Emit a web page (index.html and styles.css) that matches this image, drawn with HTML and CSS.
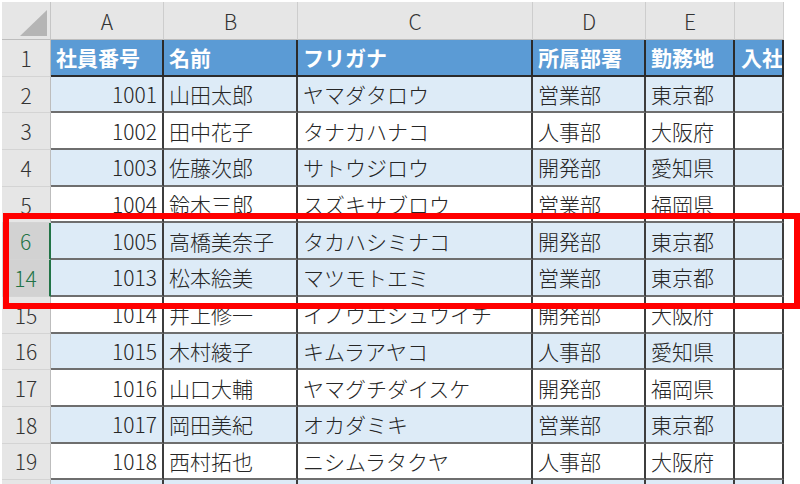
FILE: index.html
```html
<!DOCTYPE html>
<html lang="ja">
<head>
<meta charset="utf-8">
<title>社員一覧</title>
<link rel="stylesheet" href="styles.css">
</head>
<body>
<div class="page">
  <div class="sheet">
    <div class="corner"><span class="tri"></span></div>
    <div class="colhdr">A</div>
    <div class="colhdr">B</div>
    <div class="colhdr">C</div>
    <div class="colhdr">D</div>
    <div class="colhdr">E</div>
    <div class="colhdr"></div>

    <div class="rowhdr">1</div>
    <div class="th">社員番号</div><div class="th">名前</div><div class="th">フリガナ</div><div class="th">所属部署</div><div class="th">勤務地</div><div class="th clip">入社</div>

    <div class="rowhdr">2</div>
    <div class="td num band">1001</div><div class="td band">山田太郎</div><div class="td band">ヤマダタロウ</div><div class="td band">営業部</div><div class="td band">東京都</div><div class="td band"></div>

    <div class="rowhdr">3</div>
    <div class="td num">1002</div><div class="td">田中花子</div><div class="td">タナカハナコ</div><div class="td">人事部</div><div class="td">大阪府</div><div class="td"></div>

    <div class="rowhdr">4</div>
    <div class="td num band">1003</div><div class="td band">佐藤次郎</div><div class="td band">サトウジロウ</div><div class="td band">開発部</div><div class="td band">愛知県</div><div class="td band"></div>

    <div class="rowhdr">5</div>
    <div class="td num">1004</div><div class="td">鈴木三郎</div><div class="td">スズキサブロウ</div><div class="td">営業部</div><div class="td">福岡県</div><div class="td"></div>

    <div class="rowhdr sel">6</div>
    <div class="td num band">1005</div><div class="td band">高橋美奈子</div><div class="td band">タカハシミナコ</div><div class="td band">開発部</div><div class="td band">東京都</div><div class="td band"></div>

    <div class="rowhdr sel">14</div>
    <div class="td num band">1013</div><div class="td band">松本絵美</div><div class="td band">マツモトエミ</div><div class="td band">営業部</div><div class="td band">東京都</div><div class="td band"></div>

    <div class="rowhdr">15</div>
    <div class="td num">1014</div><div class="td">井上修一</div><div class="td">イノウエシュウイチ</div><div class="td">開発部</div><div class="td">大阪府</div><div class="td"></div>

    <div class="rowhdr">16</div>
    <div class="td num band">1015</div><div class="td band">木村綾子</div><div class="td band">キムラアヤコ</div><div class="td band">人事部</div><div class="td band">愛知県</div><div class="td band"></div>

    <div class="rowhdr">17</div>
    <div class="td num">1016</div><div class="td">山口大輔</div><div class="td">ヤマグチダイスケ</div><div class="td">開発部</div><div class="td">福岡県</div><div class="td"></div>

    <div class="rowhdr">18</div>
    <div class="td num band">1017</div><div class="td band">岡田美紀</div><div class="td band">オカダミキ</div><div class="td band">営業部</div><div class="td band">東京都</div><div class="td band"></div>

    <div class="rowhdr">19</div>
    <div class="td num">1018</div><div class="td">西村拓也</div><div class="td">ニシムラタクヤ</div><div class="td">人事部</div><div class="td">大阪府</div><div class="td"></div>

    <div class="rowhdr"></div>
    <div class="td num band"></div><div class="td band"></div><div class="td band"></div><div class="td band"></div><div class="td band"></div><div class="td band"></div>
  </div>
  <div class="highlight"></div>
</div>
</body>
</html>
```
FILE: styles.css
```css
html, body {
  margin: 0;
  padding: 0;
  background: #ffffff;
  overflow: hidden;
}

.page {
  position: relative;
  width: 800px;
  height: 484px;
  overflow: hidden;
  padding: 2px 0 0 2px;
  box-sizing: border-box;
  font-family: "Noto Sans CJK JP", "Noto Sans", sans-serif;
  color: #262626;
}

.sheet {
  display: grid;
  grid-template-columns: 49px 113px 134px 235px 113px 89px 49px;
  grid-template-rows: 38px repeat(13, 36.7px);
  width: 782px;
}

.corner {
  background: #e6e6e6;
  border-right: 1px solid #c6c6c6;
  border-bottom: 1px solid #bdbdbd;
  position: relative;
}

.tri {
  position: absolute;
  right: 3px;
  bottom: 3px;
  width: 0;
  height: 0;
  border-left: 27px solid transparent;
  border-bottom: 26px solid #b5b5b5;
}

.colhdr {
  background: #e6e6e6;
  border-right: 1px solid #cdcdcd;
  border-bottom: 1px solid #bdbdbd;
  display: flex;
  align-items: center;
  justify-content: center;
  font-size: 21px;
  font-weight: 300;
  color: #333333;
  box-sizing: border-box;
}

.rowhdr {
  background: #e6e6e6;
  border-right: 1px solid #bdbdbd;
  border-bottom: 1px solid #d4d4d4;
  display: flex;
  align-items: center;
  justify-content: center;
  font-size: 21px;
  font-weight: 300;
  color: #333333;
  box-sizing: border-box;
}

.rowhdr.sel {
  background: #d2d2d2;
  color: #217346;
  border-right: 2px solid #217346;
}

.th, .td {
  box-sizing: border-box;
  display: flex;
  align-items: center;
  padding: 0 4px 0 5px;
  font-size: 21px;
  font-weight: 300;
  white-space: nowrap;
  overflow: hidden;
  border-right: 2px solid #3d3d3d;
  border-bottom: 2px solid #6e6e6e;
}

.th {
  background: #5b9bd5;
  color: #ffffff;
  font-weight: 700;
  border-bottom-color: #2b2b2b;
  border-right-color: #2b2b2b;
}

.th.clip {
  padding-left: 6px;
  padding-right: 0;
}

.td.band {
  background: #ddebf7;
}

.td.num {
  justify-content: flex-end;
  padding-right: 5px;
}

.highlight {
  position: absolute;
  left: 3px;
  top: 213px;
  width: 797px;
  height: 96px;
  box-sizing: border-box;
  border: 6px solid #ff0000;
}
```
